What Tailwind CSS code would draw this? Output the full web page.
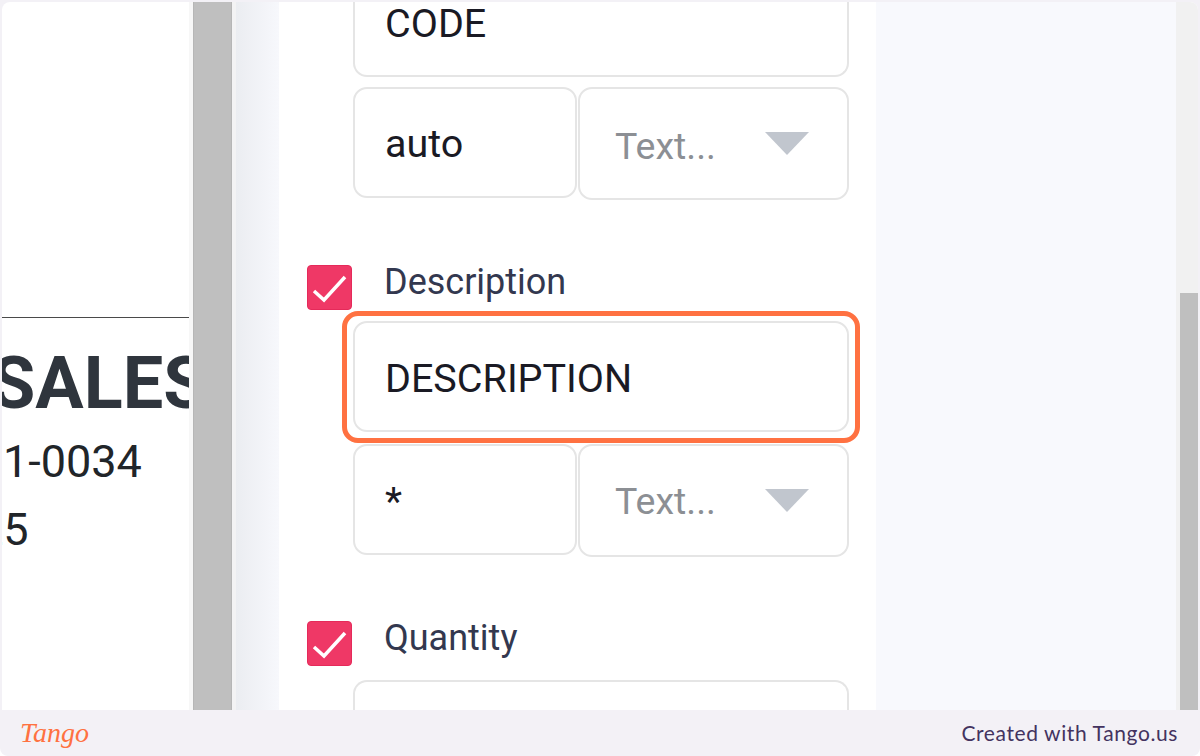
<!DOCTYPE html>
<html>
<head>
<meta charset="utf-8">
<script src="https://cdn.jsdelivr.net/npm/@tailwindcss/browser@4"></script>
</head>
<body class="m-0 bg-white">
<div class="w-[1200px] h-[756px] flex flex-col bg-[#f3f1f6] overflow-hidden rounded-b-[8px] font-['Roboto',sans-serif]">
  <div class="h-[708px] mt-[2px] mx-[2px] flex rounded-tl-[8px] rounded-tr-[8px] overflow-hidden bg-white">
    <div class="w-[187px] shrink-0 overflow-hidden pt-[315px] text-[#212529]">
      <div class="h-[1px] bg-[#4a4a4a]"></div>
      <div class="mt-[26px] text-[72px] leading-[80px] font-bold text-[#2f353d] whitespace-nowrap ml-[-11px]">SALES</div>
      <div class="mt-[12px] text-[45px] leading-[52px] ml-[1px] whitespace-nowrap">1-0034</div>
      <div class="mt-[16px] text-[45px] leading-[52px] ml-[-24px] whitespace-nowrap">25</div>
    </div>
    <div class="w-[4px] shrink-0 bg-[#f7f7f7]"></div>
    <div class="w-[39px] shrink-0 bg-[#bfbfbf] border-x border-[#b6b6b6]"></div>
    <div class="w-[4px] shrink-0 bg-[#f3f3f4]"></div>
    <div class="w-[43px] shrink-0 bg-gradient-to-r from-[#ebedf1] to-[#f7f8fc]"></div>
    <div class="w-[597px] shrink-0 bg-white overflow-hidden pl-[74px] pr-[27px] text-[39.5px] leading-[42px]">
      <div class="h-[75px] rounded-b-[14px] border-2 border-t-0 border-[#e5e5e5] pl-[30px] pt-[1px] text-[#1a1a24]">CODE</div>
      <div class="mt-[10px] flex gap-[1px] items-start">
        <div class="w-[224px] h-[111px] rounded-[14px] border-2 border-[#e5e5e5] pl-[30px] pt-[34px] text-[#1a1a24]">auto</div>
        <div class="w-[271px] h-[113px] rounded-[14px] border-2 border-[#e5e5e5] pl-[35px] pr-[38px] pt-[36px] flex justify-between text-[37.5px] text-[#8c8f94]">
          <span>Text...</span>
          <svg class="mt-[7px]" width="44" height="23" viewBox="0 0 44 23"><path d="M0 0H44L22 23Z" fill="#c1c6ce"/></svg>
        </div>
      </div>
      <div class="mt-[65px] relative h-[48px] pl-[31px] text-[#33384f]">
        <div class="absolute left-[-46px] top-[2px] w-[45px] h-[45px] rounded-[4px] bg-[#ef3866] border border-[#e52a5a] flex items-center justify-center">
          <svg class="overflow-visible" width="34" height="28" viewBox="0 0 34 28"><path d="M1 17L11 26L32 3" fill="none" stroke="#fff" stroke-width="3.5"/></svg>
        </div>
        <span class="block text-[36px] leading-[38px] mt-[-2px]">Description</span>
      </div>
      <div class="relative mt-[10px] h-[111px] rounded-[14px] border-2 border-[#e5e5e5] pl-[30px] pt-[35px] text-[#1a1a24]">
        DESCRIPTION
        <div class="absolute left-[-13px] right-[-13px] top-[-12px] bottom-[-13px] rounded-[16px] border-[5px] border-[#ff7141]"></div>
      </div>
      <div class="mt-[12px] flex gap-[1px] items-start">
        <div class="w-[224px] h-[111px] rounded-[14px] border-2 border-[#e5e5e5] pl-[30px] pt-[35px] text-[#1a1a24]">*</div>
        <div class="w-[271px] h-[113px] rounded-[14px] border-2 border-[#e5e5e5] pl-[35px] pr-[38px] pt-[34px] flex justify-between text-[37.5px] text-[#8c8f94]">
          <span>Text...</span>
          <svg class="mt-[9px]" width="44" height="23" viewBox="0 0 44 23"><path d="M0 0H44L22 23Z" fill="#c1c6ce"/></svg>
        </div>
      </div>
      <div class="mt-[64px] relative h-[48px] pl-[31px] text-[#33384f]">
        <div class="absolute left-[-46px] top-[2px] w-[45px] h-[45px] rounded-[4px] bg-[#ef3866] border border-[#e52a5a] flex items-center justify-center">
          <svg class="overflow-visible" width="34" height="28" viewBox="0 0 34 28"><path d="M1 17L11 26L32 3" fill="none" stroke="#fff" stroke-width="3.5"/></svg>
        </div>
        <span class="block text-[36px] leading-[38px] mt-[-2px]">Quantity</span>
      </div>
      <div class="mt-[13px] h-[60px] rounded-t-[14px] border-2 border-b-0 border-[#e5e5e5]"></div>
    </div>
    <div class="flex-1 bg-[#f8f9fd]"></div>
    <div class="w-[22px] shrink-0 bg-[#f1f1f1] pt-[291px] pl-[4px]">
      <div class="h-full bg-[#bfbfbf]"></div>
    </div>
  </div>
  <div class="flex-1 flex items-center justify-between pl-[20px] pr-[22px]">
    <span class="font-['Liberation_Serif',serif] italic text-[28px] leading-[32px] text-[#ff7141] font-normal">Tango</span>
    <span class="font-['Lato',sans-serif] text-[21px] leading-[24px] tracking-[0.6px] text-[#43335f]">Created with Tango.us</span>
  </div>
</div>
</body>
</html>
